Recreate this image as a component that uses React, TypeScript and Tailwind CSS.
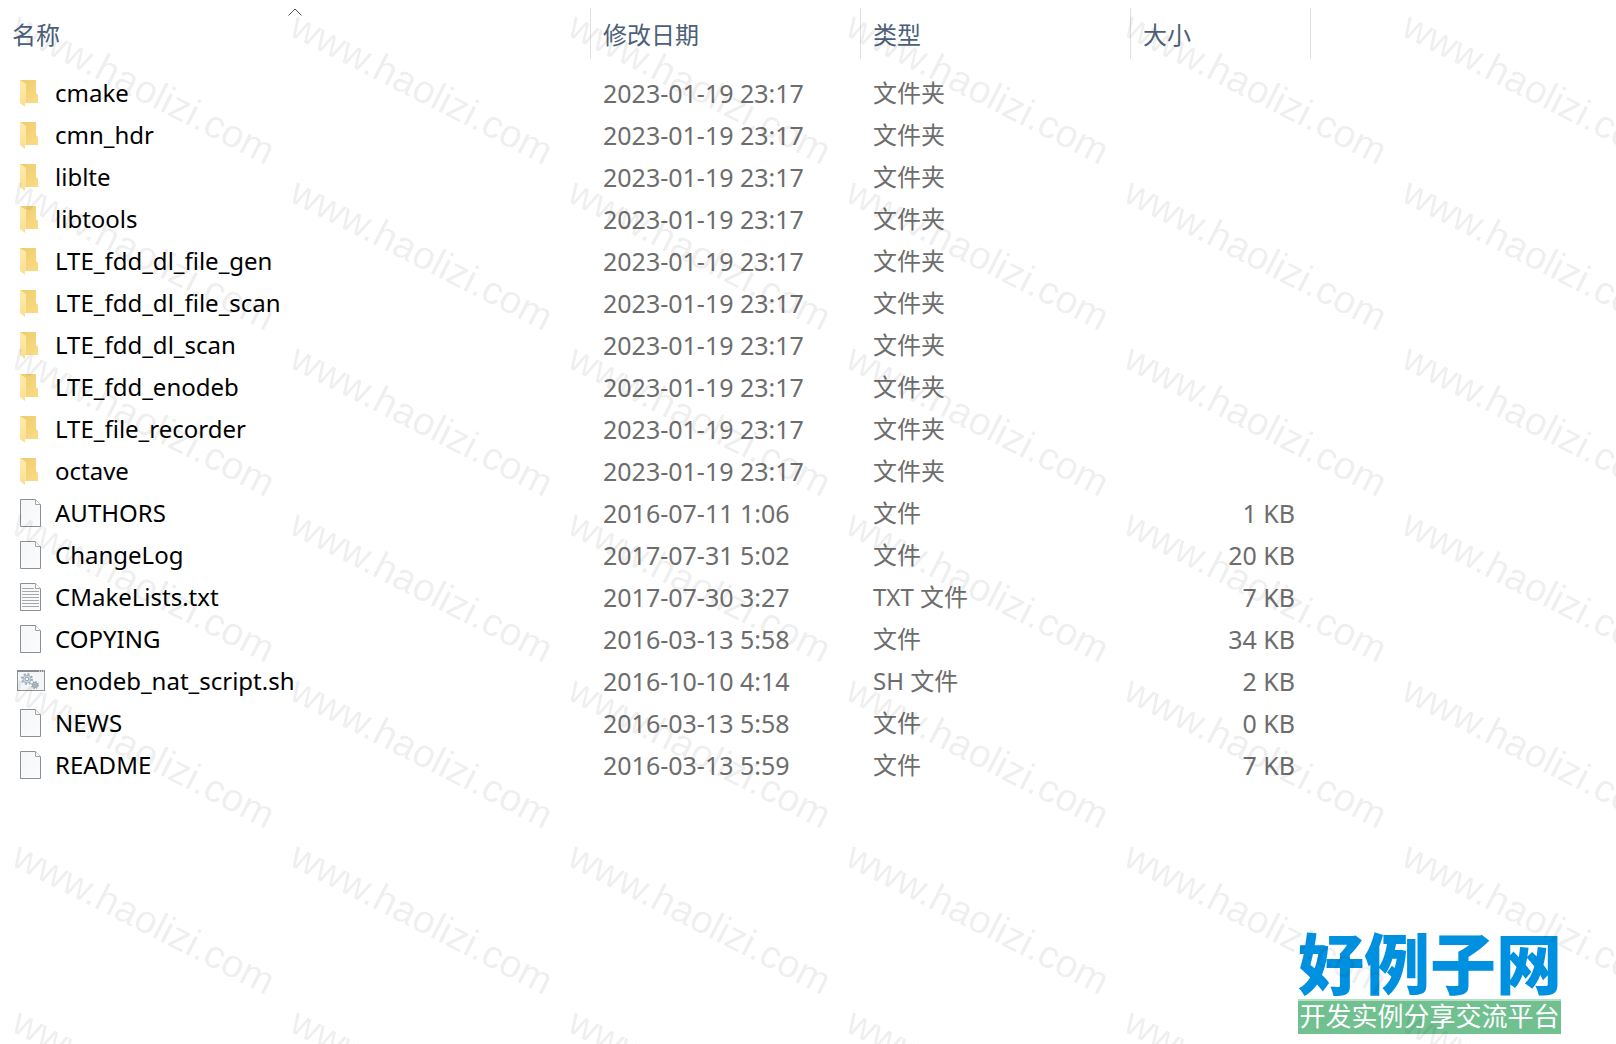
type IconKind = "folder" | "file" | "text" | "script";

interface Entry {
  name: string;
  modified: string;
  type: string;
  size?: string;
  icon: IconKind;
}

const folder = (name: string): Entry => ({
  name,
  modified: "2023-01-19 23:17",
  type: "文件夹",
  icon: "folder",
});

const entries: Entry[] = [
  folder("cmake"),
  folder("cmn_hdr"),
  folder("liblte"),
  folder("libtools"),
  folder("LTE_fdd_dl_file_gen"),
  folder("LTE_fdd_dl_file_scan"),
  folder("LTE_fdd_dl_scan"),
  folder("LTE_fdd_enodeb"),
  folder("LTE_file_recorder"),
  folder("octave"),
  { name: "AUTHORS", modified: "2016-07-11 1:06", type: "文件", size: "1 KB", icon: "file" },
  { name: "ChangeLog", modified: "2017-07-31 5:02", type: "文件", size: "20 KB", icon: "file" },
  { name: "CMakeLists.txt", modified: "2017-07-30 3:27", type: "TXT 文件", size: "7 KB", icon: "text" },
  { name: "COPYING", modified: "2016-03-13 5:58", type: "文件", size: "34 KB", icon: "file" },
  { name: "enodeb_nat_script.sh", modified: "2016-10-10 4:14", type: "SH 文件", size: "2 KB", icon: "script" },
  { name: "NEWS", modified: "2016-03-13 5:58", type: "文件", size: "0 KB", icon: "file" },
  { name: "README", modified: "2016-03-13 5:59", type: "文件", size: "7 KB", icon: "file" },
];

function FolderIcon() {
  return (
    <svg viewBox="0 0 28 28" className="h-7 w-7">
      <defs>
        <linearGradient id="folderBack" x1="0" y1="0" x2="1" y2="1">
          <stop offset="0" stopColor="#eecb6c" />
          <stop offset="1" stopColor="#fbdc86" />
        </linearGradient>
        <linearGradient id="folderFront" x1="0" y1="0" x2="0" y2="1">
          <stop offset="0" stopColor="#fdebad" />
          <stop offset="1" stopColor="#fbdf90" />
        </linearGradient>
      </defs>
      <path d="M3 1h16v13l2 2v7l1 1H4z" fill="url(#folderBack)" />
      <path d="M3 1l6 4v18l-1 1v4l-5-4z" fill="url(#folderFront)" />
    </svg>
  );
}

function PageIcon({ lines }: { lines?: boolean }) {
  return (
    <svg viewBox="0 0 28 28" className="h-7 w-7">
      <defs>
        <linearGradient id="pageFill" x1="0" y1="0" x2="1" y2="1">
          <stop offset="0" stopColor="#f4f6f7" />
          <stop offset="1" stopColor="#fbfcfd" />
        </linearGradient>
      </defs>
      <path d="M3.5.5h15l5 5v22h-20z" fill="url(#pageFill)" stroke="#8d9093" />
      <path d="M18.5.5v5h5" fill="#fff" stroke="#a3a6a8" />
      {lines && (
        <path
          d="M5 5.5h12M5 8.5h17M5 11.5h17M5 14.5h17M5 17.5h17M5 20.5h17M5 23.5h17"
          stroke="#a6a8aa"
          fill="none"
        />
      )}
    </svg>
  );
}

function ScriptIcon() {
  return (
    <svg viewBox="0 0 28 28" className="h-7 w-7">
      <rect x=".5" y="3.5" width="27" height="20" fill="#f4f5f6" stroke="#8f9499" />
      <path d="M0 4h28" stroke="#858b90" strokeWidth="2" />
      <path d="M22 4h1M24 4h1M26 4h1" stroke="#fff" />
      <circle cx="10" cy="12" r="5" fill="none" stroke="#9aabb8" strokeWidth="2" strokeDasharray="1.9 2.03" />
      <circle cx="10" cy="12" r="4" fill="#cdd8e0" stroke="#9badba" strokeWidth=".8" />
      <circle cx="10" cy="12" r="1.8" fill="#fff" stroke="#8c9ba7" strokeWidth=".9" />
      <circle cx="18" cy="18" r="3.3" fill="none" stroke="#93a1ac" strokeWidth="1.4" strokeDasharray="1.3 1.29" />
      <circle cx="18" cy="18" r="2.6" fill="#b9c5ce" stroke="#8796a2" strokeWidth=".8" />
      <circle cx="18" cy="18" r="1" fill="#e6ecf0" stroke="#7d8c99" strokeWidth=".7" />
    </svg>
  );
}

function EntryIcon({ kind }: { kind: IconKind }) {
  switch (kind) {
    case "folder":
      return <FolderIcon />;
    case "script":
      return <ScriptIcon />;
    default:
      return <PageIcon lines={kind === "text"} />;
  }
}

function HeaderCell({ label, sorted }: { label: string; sorted?: boolean }) {
  return (
    <th className="p-0 pt-2 pb-[13px] font-normal" aria-sort={sorted ? "ascending" : undefined}>
      <button className="relative block h-[51px] w-full border-r border-[#e0e0e0] px-3 pt-0.5 text-left text-2xl text-[#4c607a]">
        {label}
        {sorted && (
          <svg viewBox="0 0 14 8" className="absolute top-0 left-1/2 h-2 w-3.5 -translate-x-1/2">
            <path d="M.5 7.5L7 1l6.5 6.5" fill="none" stroke="#555" />
          </svg>
        )}
      </button>
    </th>
  );
}

function Watermark() {
  return (
    <div
      aria-hidden="true"
      className="pointer-events-none absolute inset-0 grid auto-rows-[166px] grid-cols-[repeat(6,278px)] overflow-hidden pt-1.5 pl-6"
    >
      {Array.from({ length: 42 }, (_, i) => (
        <span
          key={i}
          className="origin-top-left rotate-27 font-['Liberation_Sans',sans-serif] text-[39px] leading-[37px] whitespace-nowrap text-black/8"
        >
          www.haolizi.com
        </span>
      ))}
    </div>
  );
}

function SiteLogo() {
  return (
    <div className="absolute right-[55px] bottom-[10px] w-[263px] text-center whitespace-nowrap">
      <div className="text-[66px] leading-[72px] font-black text-[#0090e0]">好例子网</div>
      <div className="h-[35px] border-t-2 border-[#b5dfc6] bg-[#70c090] text-[26px] leading-[30px] text-white">
        开发实例分享交流平台
      </div>
    </div>
  );
}

export default function App() {
  return (
    <main className="relative min-h-screen overflow-hidden bg-white font-['Noto_Sans','Noto_Sans_CJK_SC',sans-serif]">
      <table className="w-full table-fixed border-collapse text-[25px] leading-[42px] whitespace-nowrap text-[#6d6d6d]">
        <colgroup>
          <col className="w-[591px]" />
          <col className="w-[270px]" />
          <col className="w-[270px]" />
          <col className="w-[180px]" />
          <col />
        </colgroup>
        <thead>
          <tr>
            <HeaderCell label="名称" sorted />
            <HeaderCell label="修改日期" />
            <HeaderCell label="类型" />
            <HeaderCell label="大小" />
            <td />
          </tr>
        </thead>
        <tbody>
          {entries.map((entry) => (
            <tr key={entry.name} className="h-[42px]">
              <td className="p-0 pl-[17px]">
                <div className="flex h-[42px] items-center gap-[10px] text-black">
                  <EntryIcon kind={entry.icon} />
                  <span className="text-2xl leading-[42px]">{entry.name}</span>
                </div>
              </td>
              <td className="p-0 pl-3">{entry.modified}</td>
              <td className="p-0 pl-3 text-2xl leading-[42px]">{entry.type}</td>
              <td className="p-0 pr-4 text-right">{entry.size}</td>
              <td />
            </tr>
          ))}
        </tbody>
      </table>
      <SiteLogo />
      <Watermark />
    </main>
  );
}
